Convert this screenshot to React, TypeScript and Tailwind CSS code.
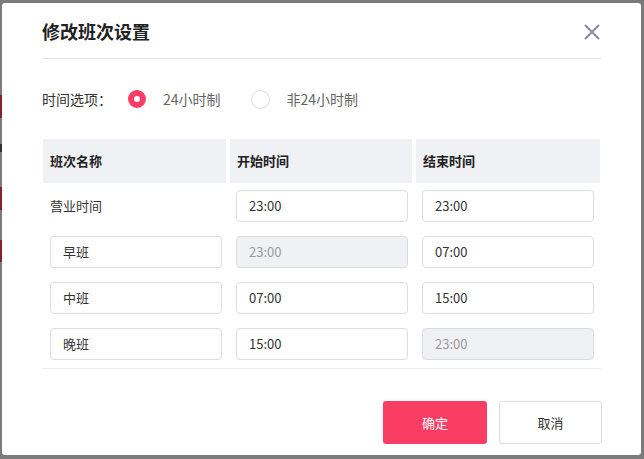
const font = { fontFamily: "'Noto Sans CJK SC','Noto Sans',sans-serif" };

type Cell = { text: string; kind: "plain" | "input" | "disabled" };

const rows: Cell[][] = [
  [
    { text: "营业时间", kind: "plain" },
    { text: "23:00", kind: "input" },
    { text: "23:00", kind: "input" },
  ],
  [
    { text: "早班", kind: "input" },
    { text: "23:00", kind: "disabled" },
    { text: "07:00", kind: "input" },
  ],
  [
    { text: "中班", kind: "input" },
    { text: "07:00", kind: "input" },
    { text: "15:00", kind: "input" },
  ],
  [
    { text: "晚班", kind: "input" },
    { text: "15:00", kind: "input" },
    { text: "23:00", kind: "disabled" },
  ],
];

function Field({ cell }: { cell: Cell }) {
  if (cell.kind === "plain") {
    return <div className="h-[32px] flex items-center text-[13px] text-[#333]">{cell.text}</div>;
  }
  const disabled = cell.kind === "disabled";
  return (
    <div
      className={
        disabled
          ? "h-[32px] w-[172px] flex items-center pl-[12px] rounded-[4px] border border-[#dcdde2] bg-[#f0f1f5] text-[13px] text-[#999]"
          : "h-[32px] w-[172px] flex items-center pl-[12px] rounded-[4px] border border-[#dcdde2] bg-white text-[13px] text-[#333]"
      }
    >
      {cell.text}
    </div>
  );
}

export default function App() {
  return (
    <div className="relative w-[644px] h-[459px] bg-[#7b7b7b] overflow-hidden" style={font}>
      {/* page behind the mask */}
      <div className="absolute left-0 top-[95px] w-[2px] h-[23px] bg-[#8a1e2e]" />
      <div className="absolute left-0 top-[144px] w-[2px] h-[8px] bg-[#333]" />
      <div className="absolute left-0 top-[187px] w-[2px] h-[23px] bg-[#8a1e2e]" />
      <div className="absolute left-0 top-[240px] w-[2px] h-[22px] bg-[#8a1e2e]" />

      {/* dialog */}
      <div className="absolute left-[2px] top-[3px] w-[639px] h-[452px] bg-white rounded-[3px] px-[40px]">
        <div className="flex items-center justify-between h-[56px] border-b border-[#e3e3e6]">
          <div className="text-[18px] font-bold text-[#222] pt-[2px]">修改班次设置</div>
          <svg width="16" height="16" viewBox="0 0 16 16" className="mr-[1px] mt-[2px]">
            <path d="M1.5 1.5 L14.5 14.5 M14.5 1.5 L1.5 14.5" stroke="#8b8ba1" strokeWidth="2" strokeLinecap="round" />
          </svg>
        </div>

        <div className="flex items-center h-[80px] text-[14px]">
          <span className="text-[#333]">时间选项：</span>
          <span className="ml-[16px] w-[18px] h-[18px] rounded-full border-[6px] border-[#fa3d63] bg-white" />
          <span className="ml-[17px] text-[#666]">24小时制</span>
          <span className="ml-[30px] w-[19px] h-[19px] rounded-full border border-[#dedee3] bg-white" />
          <span className="ml-[17px] text-[#666]">非24小时制</span>
        </div>

        <div className="ml-[1px] w-[557px]">
          <div className="grid grid-cols-[183px_182px_184px] gap-x-[4px] h-[44px]">
            {["班次名称", "开始时间", "结束时间"].map((h) => (
              <div key={h} className="bg-[#f0f1f5] flex items-center pl-[7px] text-[13px] font-bold text-[#222]">
                {h}
              </div>
            ))}
          </div>
          {rows.map((r, i) => (
            <div key={i} className="grid grid-cols-[183px_182px_184px] gap-x-[4px] h-[46px] pt-[7px]">
              {r.map((c, j) => (
                <div key={j} className={j === 0 ? "pl-[7px]" : "pl-[6px]"}>
                  <Field cell={c} />
                </div>
              ))}
            </div>
          ))}
        </div>
        <div className="mt-[1px] border-b border-[#ececef]" />

        <div className="flex justify-end gap-[12px] mt-[32px]">
          <button className="w-[104px] h-[43px] rounded-[3px] bg-[#fa3d63] text-white text-[13px]">确定</button>
          <button className="w-[103px] h-[43px] rounded-[3px] border border-[#dcdde2] bg-white text-[#333] text-[13px] mr-[-1px]">
            取消
          </button>
        </div>
      </div>
    </div>
  );
}
